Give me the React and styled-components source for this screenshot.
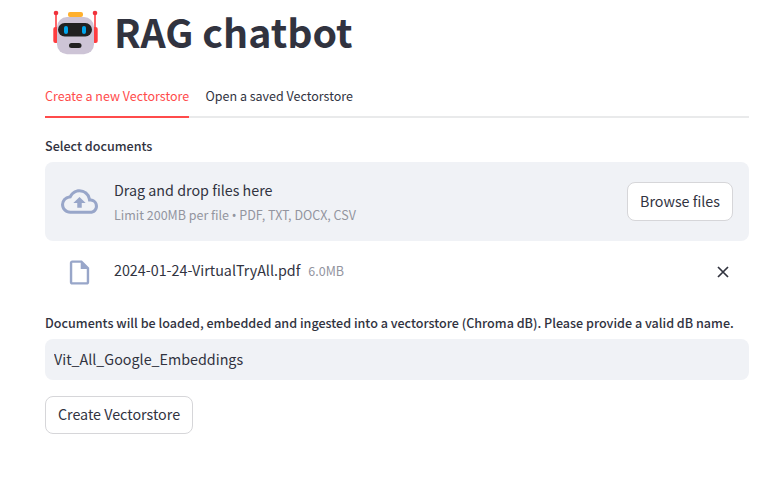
import React from "react";
import styled, { createGlobalStyle } from "styled-components";

const GlobalStyle = createGlobalStyle`
  * { box-sizing: border-box; }
  body {
    margin: 0;
    background: #fff;
    color: #31333f;
    font-family: "Source Sans Pro", "Noto Sans CJK SC", sans-serif;
    font-weight: 400;
    overflow: hidden;
  }
  button, input { font: inherit; color: inherit; }
`;

const Page = styled.main`
  width: 704px;
  height: 478px;
  margin-left: 45px;
  display: flex;
  flex-direction: column;
  align-items: stretch;
`;

const Title = styled.h1`
  display: flex;
  align-items: flex-start;
  gap: 15px;
  height: 76px;
  margin: 0;
  padding: 10px 0 0 8px;
  font-size: 39.3px;
  font-weight: 700;
  line-height: 42px;
  white-space: nowrap;
`;

const Robot = styled.svg`
  width: 46px;
  height: 45px;
  flex: none;
`;

const Tabs = styled.div`
  display: flex;
  gap: 16.5px;
  height: 42px;
  box-shadow: inset 0 -2px #e9eaeb;
`;

const Tab = styled.button`
  width: ${(p) => p.$width}px;
  height: 42px;
  padding: 0 0 1px;
  border: 0;
  border-bottom: 2px solid ${(p) => (p.$active ? "#ff4b4b" : "transparent")};
  background: none;
  color: ${(p) => (p.$active ? "#ff4b4b" : "#31333f")};
  font-size: 12.5px;
  line-height: 20px;
  text-align: left;
  white-space: nowrap;
`;

const Label = styled.label`
  height: ${(p) => p.$height}px;
  padding-top: ${(p) => p.$top}px;
  font-size: 12.57px;
  font-weight: 500;
  line-height: 20px;
  white-space: nowrap;
`;

const Dropzone = styled.section`
  display: flex;
  align-items: center;
  height: 79px;
  padding: 0 16px;
  border-radius: 8px;
  background: #f0f2f6;
`;

const CloudIcon = styled.svg`
  width: 37px;
  height: 37px;
  margin-right: 16px;
  flex: none;
  fill: #98a6c9;
`;

const Instructions = styled.div`
  flex: 1;
  display: flex;
  flex-direction: column;
  white-space: nowrap;
`;

const Main = styled.span`
  font-size: 14.3px;
  line-height: 26px;
`;

const Muted = styled.small`
  color: #93959f;
  font-size: 12.5px;
  line-height: 23px;
`;

const Bullet = styled.span`
  font-family: "Noto Sans", sans-serif;
  line-height: 1;
`;

const Button = styled.button`
  width: ${(p) => p.$width}px;
  height: ${(p) => p.$height}px;
  padding: 0 0 2px;
  border: 1px solid #d6d6d9;
  border-radius: 8px;
  background: #fff;
  font-size: 14.3px;
  line-height: 24px;
  white-space: nowrap;
`;

const FileRow = styled.div`
  display: flex;
  align-items: center;
  height: 62px;
  padding: 0 19px 0 20px;
`;

const FileIcon = styled.svg`
  width: 29px;
  height: 29px;
  margin-right: 20px;
  flex: none;
  fill: #98a6c9;
`;

const FileInfo = styled.div`
  flex: 1;
  display: flex;
  align-items: baseline;
  gap: 8px;
  padding-bottom: 4px;
  white-space: nowrap;
`;

const RemoveButton = styled.button`
  display: flex;
  padding: 0;
  border: 0;
  background: none;
`;

const NameInput = styled.input`
  height: 41px;
  padding: 0 9px 2px;
  border: 0;
  border-radius: 8px;
  background: #f0f2f6;
  font-size: 14.3px;
  outline: none;
`;

const Actions = styled.div`
  padding-top: 16px;
  display: flex;
`;

function App() {
  return (
    <>
      <GlobalStyle />
      <Page>
        <Title>
          <Robot viewBox="0 0 46 45" aria-hidden="true">
            <path d="M3 3v20M42 3v20" stroke="#ff4044" strokeWidth="1.6" />
            <circle cx="3" cy="3" r="2.3" fill="#f0323c" />
            <circle cx="42" cy="3" r="2.3" fill="#f0323c" />
            <rect x="0.3" y="17" width="5" height="16" rx="2" fill="#ff3d40" />
            <rect x="39.7" y="17" width="5" height="16" rx="2" fill="#ff3d40" />
            <rect x="4" y="7" width="37" height="37.3" rx="10" fill="#cdc4d6" />
            <rect x="15" y="2" width="15" height="5" rx="2" fill="#ffb02e" />
            <rect x="5" y="13" width="34" height="13.5" rx="6.7" fill="#212121" />
            <rect x="11" y="16" width="4" height="8" rx="2" fill="#00a6ed" />
            <rect x="29" y="16" width="4" height="8" rx="2" fill="#00a6ed" />
            <rect x="16" y="33" width="12.5" height="5" rx="2.5" fill="#212121" />
          </Robot>
          <span>RAG chatbot</span>
        </Title>
        <Tabs role="tablist">
          <Tab role="tab" $active $width={144}>Create a new Vectorstore</Tab>
          <Tab role="tab" $width={148}>Open a saved Vectorstore</Tab>
        </Tabs>
        <Label as="div" $height={44} $top={18}>Select documents</Label>
        <Dropzone>
          <CloudIcon viewBox="0 0 24 24" aria-hidden="true">
            <path d="M19.35 10.04A7.49 7.49 0 0012 4C9.11 4 6.6 5.64 5.35 8.04A5.994 5.994 0 000 14c0 3.31 2.69 6 6 6h13c2.76 0 5-2.24 5-5 0-2.64-2.05-4.78-4.65-4.96zM19 18H6c-2.21 0-4-1.79-4-4 0-2.05 1.53-3.76 3.56-3.97l1.07-.11.5-.95A5.469 5.469 0 0112 6c2.62 0 4.88 1.86 5.39 4.43l.3 1.5 1.53.11A2.98 2.98 0 0122 15c0 1.65-1.35 3-3 3zM8 13h2.55v3h2.9v-3H16l-4-4z" />
          </CloudIcon>
          <Instructions>
            <Main>Drag and drop files here</Main>
            <Muted>Limit 200MB per file <Bullet>•</Bullet> PDF, TXT, DOCX, CSV</Muted>
          </Instructions>
          <Button $width={106} $height={39}>Browse files</Button>
        </Dropzone>
        <FileRow>
          <FileIcon viewBox="0 0 24 24" aria-hidden="true">
            <path d="M14 2H6c-1.1 0-1.99.9-1.99 2L4 20c0 1.1.89 2 1.99 2H18c1.1 0 2-.9 2-2V8l-6-6zM6 20V4h7v5h5v11H6z" />
          </FileIcon>
          <FileInfo>
            <Main>2024-01-24-VirtualTryAll.pdf</Main>
            <Muted>6.0MB</Muted>
          </FileInfo>
          <RemoveButton aria-label="Remove file">
            <svg width="14" height="14" viewBox="0 0 14 14" aria-hidden="true">
              <path d="M2 2l10 10M12 2L2 12" stroke="#31333f" strokeWidth="1.7" />
            </svg>
          </RemoveButton>
        </FileRow>
        <Label htmlFor="db-name" $height={36} $top={10}>
          Documents will be loaded, embedded and ingested into a vectorstore (Chroma dB). Please provide a valid dB name.
        </Label>
        <NameInput id="db-name" defaultValue="Vit_All_Google_Embeddings" spellCheck={false} />
        <Actions>
          <Button $width={148} $height={38}>Create Vectorstore</Button>
        </Actions>
      </Page>
    </>
  );
}

export default App;
